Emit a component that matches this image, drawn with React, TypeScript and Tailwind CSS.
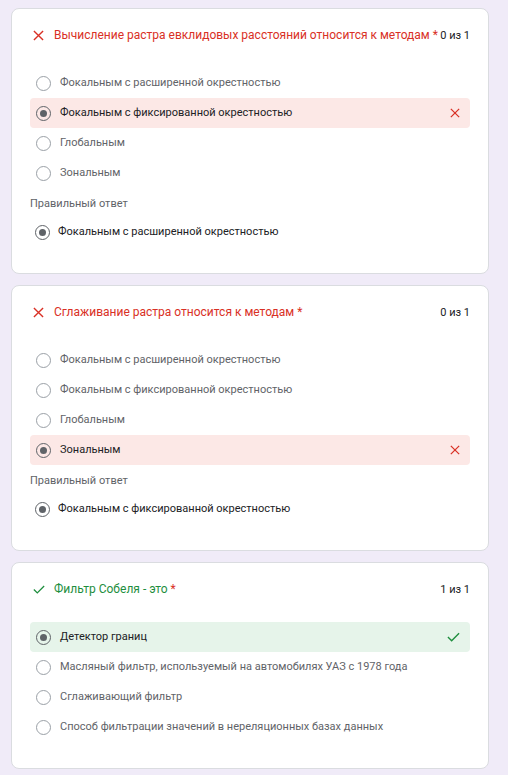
import React from 'react';

type Option = { text: string; selected?: boolean };

interface QuestionProps {
  title: string;
  score: string;
  correct: boolean;
  options: Option[];
  rightAnswer?: string;
}

function XIcon({ size }: { size: number }) {
  return (
    <svg viewBox="0 0 12 12" width={size} height={size} fill="none" stroke="#d93025" strokeWidth={1.5}>
      <path d="M1 1 L11 11 M11 1 L1 11" />
    </svg>
  );
}

function CheckIcon({ w, h }: { w: number; h: number }) {
  return (
    <svg viewBox="0 0 14 10" width={w} height={h} fill="none" stroke="#1e8e3e" strokeWidth={1.5}>
      <path d="M1 5 L5 9 L13 1" />
    </svg>
  );
}

function Radio({ checked }: { checked?: boolean }) {
  if (checked) {
    return (
      <div className="w-[15px] h-[15px] rounded-full border-[1.5px] border-[#5f6368] flex items-center justify-center shrink-0">
        <div className="w-[7px] h-[7px] rounded-full bg-[#5f6368]" />
      </div>
    );
  }
  return <div className="w-[15px] h-[15px] rounded-full border-[1.5px] border-[#9aa0a6] shrink-0" />;
}

function Question({ title, score, correct, options, rightAnswer }: QuestionProps) {
  return (
    <div className="bg-white rounded-lg border border-[#dadce0] px-[18px] pt-[18px] pb-[26px]">
      {/* header */}
      <div className="flex items-center h-[17px]">
        <div className="w-[24px] pl-[3px] shrink-0 flex items-center">
          {correct ? <CheckIcon w={12} h={9} /> : <XIcon size={11} />}
        </div>
        <div className={`flex-1 text-[12px] leading-[17px] whitespace-nowrap ${correct ? 'text-[#1e8e3e]' : 'text-[#d93025]'}`}>
          {title} <span className="text-[#d93025]">*</span>
        </div>
        <div className="text-[11px] leading-[17px] text-[#202124] shrink-0">{score}</div>
      </div>

      {/* options */}
      <div className="mt-[24px] flex flex-col">
        {options.map((o) => (
          <div
            key={o.text}
            className={`h-[30px] flex items-center pl-[6px] pr-[10px] rounded ${
              o.selected ? (correct ? 'bg-[#e6f4ea]' : 'bg-[#fce8e6]') : ''
            }`}
          >
            <Radio checked={o.selected} />
            <span
              className={`ml-[9px] flex-1 text-[11px] ${o.selected ? 'text-[#202124]' : 'text-[#5f6368]'}`}
            >
              {o.text}
            </span>
            {o.selected && (correct ? <CheckIcon w={13} h={10} /> : <XIcon size={10} />)}
          </div>
        ))}
      </div>

      {rightAnswer && (
        <div className="mt-[3px]">
          <div className="h-[26px] flex items-center text-[11px] text-[#5f6368]">Правильный ответ</div>
          <div className="h-[30px] flex items-center pl-[5px]">
            <Radio checked />
            <span className="ml-[8px] text-[11px] text-[#202124]">{rightAnswer}</span>
          </div>
        </div>
      )}
    </div>
  );
}

export default function App() {
  return (
    <div
      className="min-h-[775px] bg-[#f0ebf8] pt-[8px] pl-[11px] pr-[19px] flex flex-col gap-[11px]"
      style={{ fontFamily: 'Roboto, "Noto Sans", sans-serif' }}
    >
      <Question
        title="Вычисление растра евклидовых расстояний относится к методам"
        score="0 из 1"
        correct={false}
        options={[
          { text: 'Фокальным с расширенной окрестностью' },
          { text: 'Фокальным с фиксированной окрестностью', selected: true },
          { text: 'Глобальным' },
          { text: 'Зональным' },
        ]}
        rightAnswer="Фокальным с расширенной окрестностью"
      />
      <Question
        title="Сглаживание растра относится к методам"
        score="0 из 1"
        correct={false}
        options={[
          { text: 'Фокальным с расширенной окрестностью' },
          { text: 'Фокальным с фиксированной окрестностью' },
          { text: 'Глобальным' },
          { text: 'Зональным', selected: true },
        ]}
        rightAnswer="Фокальным с фиксированной окрестностью"
      />
      <Question
        title="Фильтр Собеля - это"
        score="1 из 1"
        correct
        options={[
          { text: 'Детектор границ', selected: true },
          { text: 'Масляный фильтр, используемый на автомобилях УАЗ с 1978 года' },
          { text: 'Сглаживающий фильтр' },
          { text: 'Способ фильтрации значений в нереляционных базах данных' },
        ]}
      />
    </div>
  );
}
